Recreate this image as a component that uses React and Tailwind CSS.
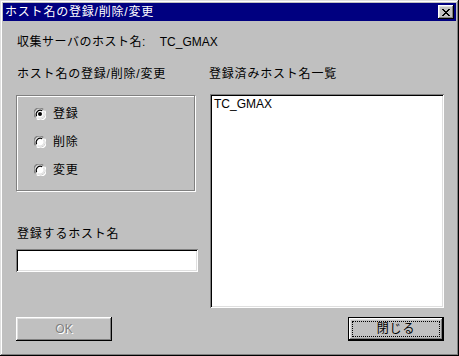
import React, { useState } from "react";

const font = { fontFamily: '"Liberation Sans", "Noto Sans CJK JP", sans-serif' };

const Radio = ({ checked, label, onClick }) => {
  return (
    <div className="flex items-center h-[14px] cursor-default" onClick={onClick}>
      <svg width="12" height="12" viewBox="0 0 12 12" className="shrink-0">
        <circle cx="6" cy="6" r="5" fill="#ffffff" />
        <path d="M1.5 9.2 A5.3 5.3 0 0 1 9.2 1.5" stroke="#808080" strokeWidth="1.3" fill="none" />
        <path d="M2.6 8.2 A4.2 4.2 0 0 1 8.2 2.6" stroke="#000000" strokeWidth="1.2" fill="none" />
        <path d="M2.8 10.5 A5.3 5.3 0 0 0 10.5 2.8" stroke="#ffffff" strokeWidth="1.3" fill="none" />
        <path d="M3.6 9.4 A4.2 4.2 0 0 0 9.4 3.6" stroke="#dfdfdf" strokeWidth="1.2" fill="none" />
        {checked && <circle cx="6" cy="6" r="2" fill="#000000" />}
      </svg>
      <span className="ml-[7px] text-[12px] leading-[12px] tracking-[0.8px] text-black">{label}</span>
    </div>
  );
};

const App = () => {
  const [mode, setMode] = useState("register");
  const [host, setHost] = useState("");

  return (
    <div
      style={font}
      className="w-[459px] h-[356px] bg-[#c0c0c0] p-[3px] flex flex-col shadow-[inset_-1px_-1px_#000000,inset_1px_1px_#dfdfdf,inset_-2px_-2px_#808080,inset_2px_2px_#ffffff]"
    >
      {/* title bar */}
      <div className="h-[18px] bg-[#000080] flex items-center justify-between pl-[2px] pr-[2px]">
        <span className="text-white text-[12px] leading-[12px] tracking-[0.8px]">ホスト名の登録/削除/変更</span>
        <button className="w-[16px] h-[14px] bg-[#c0c0c0] flex items-center justify-center shadow-[inset_-1px_-1px_#000000,inset_1px_1px_#ffffff,inset_-2px_-2px_#808080,inset_2px_2px_#dfdfdf]">
          <svg width="8" height="7" viewBox="0 0 8 7">
            <path d="M0 0h2v1h1v1h2V1h1V0h2v1H7v1H6v1H5v1h1v1h1v1h1v1H6V6H5V5H3v1H2v1H0V6h1V5h1V4h1V3H2V2H1V1H0z" fill="#000000" />
          </svg>
        </button>
      </div>

      {/* body */}
      <div className="flex flex-col px-[13px]">
        <div className="mt-[15px] flex text-[12px] leading-[12px] text-black">
          <span className="ml-[1px] tracking-[0.5px]">収集サーバのホスト名:</span>
          <span className="ml-[14px]">TC_GMAX</span>
        </div>

        <div className="mt-[20px] flex">
          {/* left column */}
          <div className="w-[182px] flex flex-col">
            <div className="ml-[1px] text-[12px] leading-[12px] tracking-[0.8px] text-black">ホスト名の登録/削除/変更</div>
            <div className="mt-[15px] w-[179px] h-[96px] border border-[#808080] shadow-[inset_1px_1px_#ffffff,1px_1px_#ffffff] flex flex-col gap-[14px] pl-[17px] pt-[11px]">
              <Radio checked={mode === "register"} label="登録" onClick={() => setMode("register")} />
              <Radio checked={mode === "delete"} label="削除" onClick={() => setMode("delete")} />
              <Radio checked={mode === "change"} label="変更" onClick={() => setMode("change")} />
            </div>
            <div className="mt-[37px] ml-[1px] text-[12px] leading-[12px] tracking-[0.8px] text-black">登録するホスト名</div>
            <input
              value={host}
              onChange={(e) => setHost(e.target.value)}
              className="mt-[9px] w-[182px] h-[23px] bg-white px-[4px] text-[12px] outline-none shadow-[inset_1px_1px_#808080,inset_-1px_-1px_#ffffff,inset_2px_2px_#000000,inset_-2px_-2px_#dfdfdf]"
            />
          </div>

          {/* right column */}
          <div className="ml-[12px] flex flex-col">
            <div className="ml-[-1px] text-[12px] leading-[12px] tracking-[0.8px] text-black">登録済みホスト名一覧</div>
            <div className="mt-[14px] w-[234px] h-[214px] bg-white pl-[4px] pt-[4px] shadow-[inset_1px_1px_#808080,inset_-1px_-1px_#ffffff,inset_2px_2px_#000000,inset_-2px_-2px_#dfdfdf]">
              <div className="text-[12px] leading-[12px] text-black">TC_GMAX</div>
            </div>
          </div>
        </div>

        {/* buttons */}
        <div className="mt-[9px] flex justify-between w-[428px]">
          <button
            disabled
            className="w-[96px] h-[24px] bg-[#c0c0c0] text-[12px] leading-[12px] text-[#808080] [text-shadow:1px_1px_#ffffff] shadow-[inset_-1px_-1px_#000000,inset_1px_1px_#ffffff,inset_-2px_-2px_#808080,inset_2px_2px_#dfdfdf]"
          >
            OK
          </button>
          <button className="w-[96px] h-[24px] bg-[#c0c0c0] border border-black p-[3px] shadow-[inset_-1px_-1px_#000000,inset_1px_1px_#ffffff,inset_-2px_-2px_#808080,inset_2px_2px_#dfdfdf]">
            <div className="w-full h-full border border-dotted border-black flex items-center justify-center text-[12px] leading-[12px] tracking-[0.8px] text-black">
              閉じる
            </div>
          </button>
        </div>
      </div>
    </div>
  );
};

export default App;
